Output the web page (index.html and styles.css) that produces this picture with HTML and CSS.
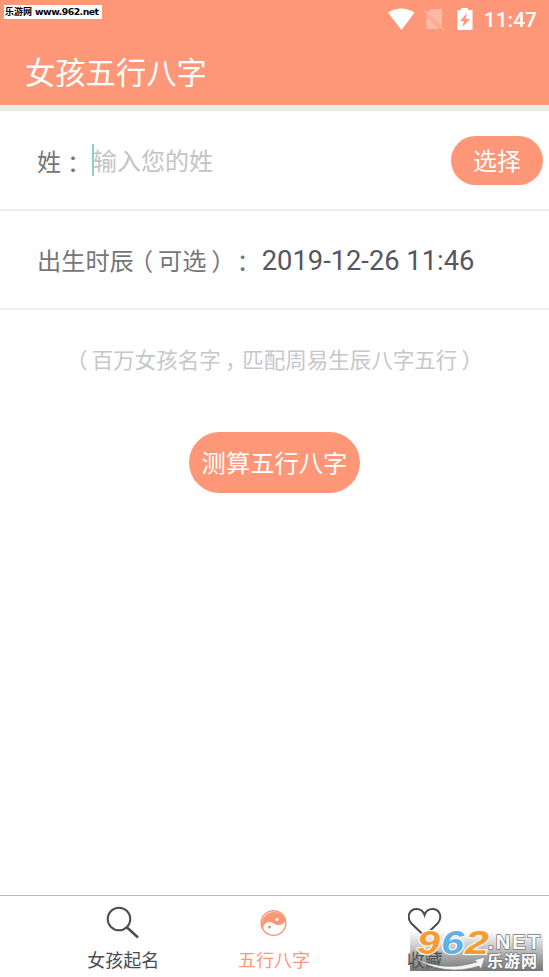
FILE: index.html
```html
<!DOCTYPE html>
<html lang="zh-CN">
<head>
<meta charset="utf-8">
<title>女孩五行八字</title>
<link rel="stylesheet" href="styles.css">
</head>
<body>
<div class="screen">
  <header class="header">
    <div class="source-tag"><span class="tag-cn">乐游网</span><span>www.962.net</span></div>
    <div class="status">
      <svg class="status-icons" width="86" height="24" viewBox="0 0 86 24">
        <path d="M0 4.500Q13 -3.500 26.500 4.500L13.500 22Z" fill="#fff"/>
        <path d="M43 1H54V18L39 4.500ZM38.500 7L52 21H38.500Z" fill="#ffb9a2"/>
        <path d="M36.500 3L56 22" stroke="#ffb9a2" stroke-width="1.700"/>
        <path fill="#fff" fill-rule="evenodd" d="M73 0H80V2H84.500V22H69.500V2H73ZM79 5L72 13H76L74.500 19L82 11H77.500Z"/>
      </svg>
      <span class="clock">11:47</span>
    </div>
    <h1 class="title">女孩五行八字</h1>
  </header>
  <main class="form">
    <section class="row">
      <label class="label">姓<span class="colon" lang="zh-TW">：</span></label>
      <div class="input">输入您的姓</div>
      <button class="choose">选择</button>
    </section>
    <section class="row row-date">
      <span class="label">出生时辰<span class="open">（</span>可选<span class="close">）</span><span class="colon" lang="zh-TW">：</span></span>
      <span class="date">2019-12-26 11:46</span>
    </section>
    <p class="hint"><span class="open">（</span>百万女孩名字<span class="close">，</span>匹配周易生辰八字五行<span class="close">）</span></p>
    <button class="submit">测算五行八字</button>
  </main>
  <nav class="tabs">
    <a class="tab">
      <svg width="34" height="34" viewBox="0 0 34 34" fill="none" stroke="#4b4b55" stroke-width="2"><circle cx="13" cy="14" r="11.300"/><path d="M20.500 22L32 32.500" stroke-width="2.400"/></svg>
      <span>女孩起名</span>
    </a>
    <a class="tab active">
      <svg width="34" height="34" viewBox="0 0 34 34"><circle cx="16.500" cy="18" r="12.300" fill="#fff" stroke="#f59a78" stroke-width="1.500"/><path d="M6 25A12.500 12.500 0 1 1 28.500 14C28 21 20 21 16.500 18.500C12 15 6 18 6 25Z" fill="#fe9778"/><circle cx="20" cy="14.500" r="1.500" fill="#fff"/><circle cx="12.500" cy="22" r="1.600" fill="#e99273"/></svg>
      <span>五行八字</span>
    </a>
    <a class="tab">
      <svg width="34" height="34" viewBox="0 0 34 34" fill="none" stroke="#4b4b55" stroke-width="2"><path d="M16.500 31L3 18C-2 11 2 4 8.500 4C13 4 15.500 7 16.500 10C17.500 7 20 4 24.500 4C31 4 35 11 30 18Z"/></svg>
      <span>收藏</span>
    </a>
  </nav>
  <div class="watermark">
    <svg width="140" height="60" viewBox="0 -10 140 60">
      <defs><linearGradient id="shade" x1="0" y1="0" x2="0" y2="1"><stop offset="0" stop-color="#555" stop-opacity="0"/><stop offset="1" stop-color="#555" stop-opacity=".8"/></linearGradient></defs>
      <rect x="0" y="4" width="133" height="40" fill="url(#shade)"/>
      <path d="M2 30Q34 46 67 35L64 33L75 30L71 42L69 39Q34 50 2 30Z" fill="#f4f4f4" stroke="#777" stroke-width=".5"/>
      <g class="mark-digits"><text x="7" y="27" fill="#f99a32" textLength="23" lengthAdjust="spacingAndGlyphs">9</text><text x="31" y="27" fill="#62b1e5" textLength="23" lengthAdjust="spacingAndGlyphs">6</text><text x="55" y="27" fill="#f99a32" textLength="24" lengthAdjust="spacingAndGlyphs">2</text></g>
      <text class="mark-net" x="78" y="22" textLength="52">.NET</text>
      <text class="mark-cn" x="77" y="39.500" textLength="50">乐游网</text>
    </svg>
  </div>
</div>
</body>
</html>
```
FILE: styles.css
```css
* { box-sizing: border-box; }
body { margin: 0; background: #fff; font-family: Roboto, "Noto Sans CJK SC", sans-serif; text-spacing-trim: space-all; }
.screen { position: relative; width: 549px; height: 977px; display: flex; flex-direction: column; overflow: hidden; }
.header { position: relative; height: 111px; background: #fe9778; border-bottom: 6px solid #efe9e3; display: flex; flex-direction: column; }
.source-tag { position: absolute; left: 4px; top: 5px; width: 98px; height: 14px; background: #fff; color: #000; display: flex; align-items: center; gap: 3px; padding-left: 1px; font: bold 9.300px/14px "DejaVu Sans", sans-serif; white-space: nowrap; letter-spacing: -.5px; }
.tag-cn { font: bold 9px/14px "Noto Sans CJK SC", sans-serif; letter-spacing: 0; }
.status { display: flex; justify-content: flex-end; align-items: center; gap: 11px; height: 40px; padding-right: 12px; color: #fff; }
.status-icons { margin: 0 -1px 1px 0; }
.clock { font-size: 21px; font-weight: 500; line-height: 40px; }
.title { margin: 10px 0 0 25px; color: #fff; font-size: 30.300px; font-weight: 400; line-height: 48px; }
.form { flex: 1; display: flex; flex-direction: column; align-items: center; }
.row { width: 100%; height: 100px; border-bottom: 2px solid #efeee8; padding: 0 6px 0 37px; display: flex; align-items: center; color: #767676; font-size: 24px; white-space: nowrap; }
.row-date { height: 99px; }
.row-date .label { font-size: 24.200px; padding-bottom: 1px; }
.colon { font-family: "Noto Sans CJK TC", sans-serif; line-height: 0; vertical-align: -2px; }
.open { margin: 0 .2em 0 -.2em; }
.close { margin: 0 -.2em 0 .2em; }
.input { border-left: 2px solid #8bd0c9; height: 32px; line-height: 36px; margin-left: 7px; text-indent: -1px; color: #c2c3c7; flex: 1; }
button { border: 0; padding: 0; color: #fff; background: #fe9778; font-family: inherit; font-size: 24px; }
.choose { width: 92px; height: 49px; border-radius: 25px; padding-bottom: 2px; }
.date { color: #56565e; font-size: 27.300px; margin-left: 7px; padding-top: 3px; }
.hint { margin: 34px 0 0; font-size: 21.500px; line-height: 34px; color: #c6c7ca; white-space: nowrap; }
.submit { width: 171px; height: 61px; border-radius: 31px; margin-top: 54px; font-size: 24.300px; padding-bottom: 2px; }
.tabs { height: 82px; border-top: 1px solid #b9b9b9; padding: 9px 49px 0 48px; display: flex; }
.tab { flex: 1; display: flex; flex-direction: column; align-items: center; color: #4b4b55; font-size: 18px; line-height: 26px; gap: 9px; }
.active { color: #fe9778; }
.watermark { position: absolute; left: 410px; top: 917px; }
.mark-digits { font: italic bold 33px "Liberation Sans", sans-serif; paint-order: stroke; stroke: #fff; stroke-width: 2px; }
.mark-net, .mark-cn { fill: #fff; stroke: #777; stroke-width: 1.500px; paint-order: stroke; font: bold 20px "Liberation Sans", sans-serif; }
.mark-cn { font: bold 16px "Noto Sans CJK SC", sans-serif; }
```
